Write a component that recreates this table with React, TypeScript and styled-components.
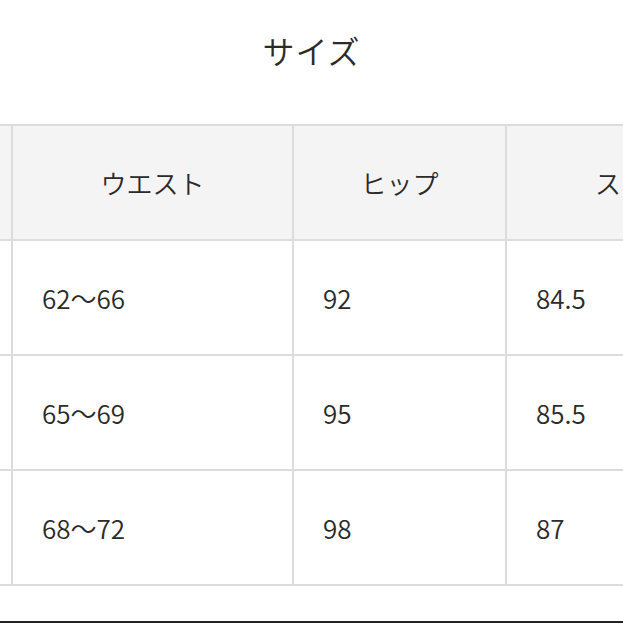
import React from "react";
import styled, { createGlobalStyle } from "styled-components";

const Global = createGlobalStyle`
  html, body { margin: 0; padding: 0; background: #ffffff; }
  body { font-family: "Noto Sans CJK JP", "Noto Sans", sans-serif; color: #333333; }
`;

const Page = styled.div`
  width: 623px;
  height: 623px;
  overflow: hidden;
  display: flex;
  flex-direction: column;
  background: #ffffff;
`;

const Title = styled.h2`
  margin: 0;
  height: 124px;
  display: flex;
  align-items: flex-start;
  justify-content: center;
  padding-top: 28px;
  box-sizing: border-box;
  font-size: 32px;
  font-weight: 350;
  line-height: 44px;
  color: #2b2b2b;
  letter-spacing: 1px;
`;

const Scroller = styled.div`
  width: 623px;
  overflow: hidden;
`;

const Grid = styled.div`
  display: grid;
  grid-template-columns: 100px 279px 211px 306px;
  grid-auto-rows: 113px;
  gap: 2px;
  padding: 2px;
  background: #dcdcdc;
  width: max-content;
  margin-left: -91px;
`;

const Cell = styled.div<{ $head?: boolean }>`
  background: ${(p) => (p.$head ? "#f4f4f4" : "#ffffff")};
  display: flex;
  align-items: center;
  justify-content: ${(p) => (p.$head ? "center" : "flex-start")};
  padding: ${(p) => (p.$head ? "0" : "0 0 0 29px")};
  box-sizing: border-box;
  font-size: 26px;
  font-weight: 350;
  color: #2b2b2b;
  white-space: nowrap;
  overflow: hidden;
`;

const BottomBar = styled.div`
  margin-top: auto;
  height: 2px;
  background: #222222;
`;

const header = ["サイズ", "ウエスト", "ヒップ", "スカート丈"];
const rows = [
  ["S", "62〜66", "92", "84.5"],
  ["M", "65〜69", "95", "85.5"],
  ["L", "68〜72", "98", "87"],
];

export default function App() {
  return (
    <>
      <Global />
      <Page>
        <Title>サイズ</Title>
        <Scroller>
          <Grid>
            {header.map((h, i) => (
              <Cell key={"h" + i} $head>
                {i === 0 ? "" : h}
              </Cell>
            ))}
            {rows.map((r, ri) =>
              r.map((v, ci) => (
                <Cell key={ri + "-" + ci}>{ci === 0 ? "" : v}</Cell>
              ))
            )}
          </Grid>
        </Scroller>
        <BottomBar />
      </Page>
    </>
  );
}
